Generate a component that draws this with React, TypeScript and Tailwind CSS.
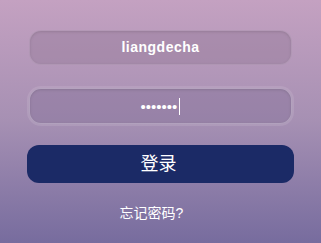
export default function App() {
  return (
    <div className="w-[321px] h-[243px] overflow-hidden bg-gradient-to-b from-[#c4a1c1] via-[#a690b3] to-[#776c9e] flex flex-col pt-[30px] font-['Liberation_Sans','Noto_Sans_CJK_SC',sans-serif]">
      {/* username */}
      <div className="mx-[29px] h-[35px] rounded-[12px] bg-[#94799a]/45 border border-white/10 shadow-[inset_0_1px_3px_rgba(0,0,0,0.12)] flex items-center justify-center">
        <span className="text-white text-[14px] font-bold tracking-[0.5px]">liangdecha</span>
      </div>

      {/* password (focused) */}
      <div className="mt-[23px] mx-[29px] h-[36px] rounded-[12px] bg-[#85719a]/45 border border-white/25 shadow-[0_0_0_2px_rgba(255,255,255,0.1),inset_0_1px_3px_rgba(0,0,0,0.12)] flex items-center justify-center">
        <span className="text-white text-[15px] leading-none">•••••••</span>
        <span className="ml-[2px] w-px h-[17px] bg-white" />
      </div>

      {/* login button */}
      <button className="mt-[21px] mx-[27px] h-[38px] rounded-[12px] bg-[#1b2a66] text-white text-[18px] pr-[4px] flex items-center justify-center">
        登录
      </button>

      <div className="mt-[20px] pr-[18px] text-center text-white text-[14px]">忘记密码?</div>
    </div>
  );
}
